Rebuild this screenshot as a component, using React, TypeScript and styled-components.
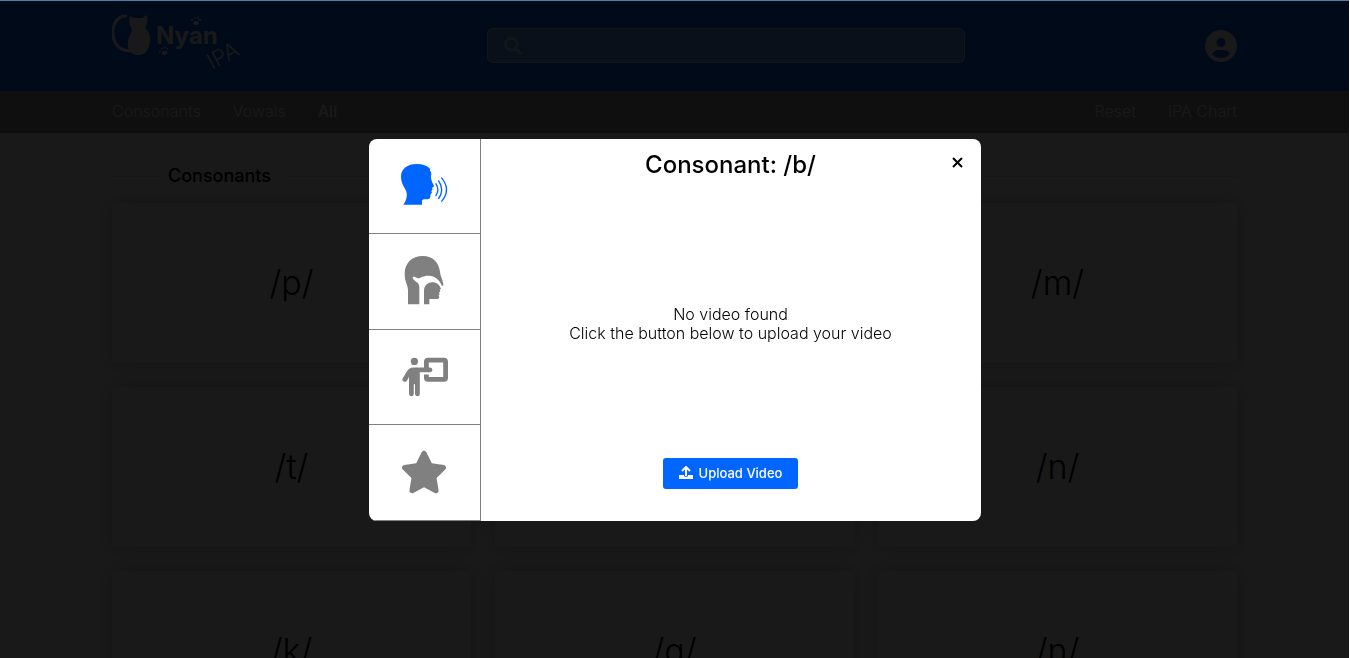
import React from "react";
import styled, { createGlobalStyle } from "styled-components";
import { FaCircleUser, FaPersonChalkboard, FaStar } from "react-icons/fa6";
import { FaSearch } from "react-icons/fa";

const GlobalStyle = createGlobalStyle`
  *, *::before, *::after { box-sizing: border-box; }
  body {
    margin: 0;
    overflow: hidden;
    background: #fff;
    color: #000;
    font-family: Inter, "Liberation Sans", sans-serif;
    font-size: 16px;
    line-height: 19px;
  }
  button, input { font: inherit; color: inherit; }
`;

const Page = styled.div`
  margin-right: 1px;
  background: #fafafa;
`;

const Header = styled.header`
  display: flex;
  align-items: center;
  justify-content: space-between;
  height: 91px;
  padding: 0 112px;
  background: #0066ff;
  color: #fff;
`;

const LogoLink = styled.a`
  display: block;
  width: 135px;
  height: 64px;
  color: inherit;
`;

const SearchBox = styled.label`
  display: flex;
  align-items: center;
  gap: 12px;
  width: 42.5%;
  height: 35px;
  padding: 0 16px;
  border: 1px solid rgba(255, 255, 255, 0.5);
  border-radius: 6px;
  background: rgba(255, 255, 255, 0.4);

  svg { opacity: 0.6; }
`;

const SearchInput = styled.input`
  flex: 1;
  min-width: 0;
  border: 0;
  outline: 0;
  background: transparent;
`;

const IconButton = styled.button`
  display: flex;
  padding: 0;
  border: 0;
  background: transparent;
  cursor: pointer;
`;

const Nav = styled.nav`
  display: flex;
  justify-content: space-between;
  align-items: center;
  height: 42px;
  padding: 0 112px 2px;
  background: #98989c;
`;

const NavGroup = styled.div`
  display: flex;
  gap: 32px;
`;

const NavLink = styled.a<{ $active?: boolean }>`
  color: #fff;
  font-weight: ${(p) => (p.$active ? 500 : 300)};
  text-decoration: none;
`;

const Main = styled.main`
  padding: 32px 112px;
`;

const SectionTitle = styled.h2`
  display: flex;
  align-items: center;
  gap: 8px;
  margin: 0 0 16px;
  font-size: 18px;
  font-weight: 500;
  line-height: 22px;

  &::before, &::after {
    content: "";
    height: 1px;
    background: #e0e0e0;
  }
  &::before { width: 48px; }
  &::after { flex: 1; margin-left: 8px; }
`;

const CardGrid = styled.div`
  display: grid;
  grid-template-columns: repeat(3, 1fr);
  gap: 24px;
`;

const Card = styled.button`
  height: 160px;
  border: 0;
  border-radius: 4px;
  background: #fff;
  box-shadow: 0 0 16px rgba(0, 0, 0, 0.2);
  font-size: 34px;
  font-weight: 300;
  line-height: 40px;
  cursor: pointer;
`;

const Overlay = styled.div`
  position: fixed;
  inset: 0 1px 0 0;
  display: flex;
  align-items: center;
  justify-content: center;
  border-top: 1px solid #4f7ea3;
  background: rgba(0, 0, 0, 0.9);
`;

const Dialog = styled.section`
  display: flex;
  width: 612px;
  max-width: 90%;
  min-height: 382px;
  border-radius: 8px;
  overflow: hidden;
  background: #fff;
`;

const Tabs = styled.div`
  display: grid;
  grid-template-rows: repeat(4, 1fr);
  width: 112px;
  border-right: 1px solid #808080;
`;

const Tab = styled.button<{ $active?: boolean }>`
  display: flex;
  align-items: center;
  justify-content: center;
  padding: 0;
  border: 0;
  border-bottom: 1px solid #808080;
  background: transparent;
  color: ${(p) => (p.$active ? "#0066ff" : "#808080")};
  cursor: pointer;
`;

const Panel = styled.div`
  flex: 1;
  display: flex;
  flex-direction: column;
  padding: 11px 16px 32px;
`;

const PanelHeader = styled.div`
  display: grid;
  grid-template-columns: 1fr auto 1fr;
  align-items: center;
`;

const Title = styled.h1`
  grid-column: 2;
  margin: 0;
  font-size: 24px;
  font-weight: 500;
  line-height: 29px;
`;

const CloseButton = styled(IconButton)`
  justify-self: end;
  align-self: start;
  padding: 6px 0;
`;

const Message = styled.div`
  flex: 1;
  display: flex;
  flex-direction: column;
  justify-content: center;
  padding-top: 12px;
  text-align: center;
  font-weight: 300;

  p { margin: 0; }
`;

const UploadButton = styled.button`
  display: flex;
  align-items: center;
  align-self: center;
  gap: 6px;
  height: 31px;
  padding: 0 16px;
  border: 0;
  border-radius: 3px;
  background: #0066ff;
  color: #fff;
  font-size: 13px;
  font-weight: 500;
  line-height: 16px;
  cursor: pointer;
`;

const Paw = () => (
  <g>
    <ellipse cx="0" cy="2" rx="3" ry="2" />
    <circle cx="-4" cy="-1" r="1" />
    <circle cx="-1" cy="-3" r="1" />
    <circle cx="2" cy="-3" r="1" />
    <circle cx="4" cy="-1" r="1" />
  </g>
);

const Logo = () => (
  <svg width="135" height="64" viewBox="112 14 135 64" fill="currentColor" aria-hidden="true">
    <path d="M127 16C117 15 112 25 113 35C114 46 122 51 131 51" fill="none" stroke="currentColor" strokeWidth="3" />
    <path d="M130 16L134 18H142L147 15C148 21 147 25 145 28C151 33 151 40 149 46C147 53 143 55 138 55C131 55 127 49 128 41C129 36 132 32 132 29C129 25 129 20 130 16Z" />
    <text x="156" y="44" fontSize="24" fontWeight="700">Nyan</text>
    <text transform="translate(212 70) rotate(-28)" fontSize="22" fontWeight="300">IPA</text>
    <g transform="translate(196 21)"><Paw /></g>
    <g transform="translate(164 51) rotate(-20)"><Paw /></g>
  </svg>
);

const SpeakIcon = () => (
  <svg width="56" height="56" viewBox="108 82 168 168" fill="currentColor" aria-hidden="true">
    <path d="M130 222C138 211 142 198 140 186C137 173 123 160 123 138C123 114 143 100 170 100C188 100 202 105 211 115L209 119C214 124 215 129 213 135C212 141 214 146 215 150C217 157 222 163 222 167C221 170 217 170 216 172L218 177L214 181L216 186L212 190C211 196 212 201 208 204C202 207 188 203 186 210V222Z" />
    <g fill="none" stroke="currentColor" strokeWidth="4">
      <path d="M227 158Q240 177 227 196" />
      <path d="M235 149Q255 177 235 205" />
      <path d="M244 141Q275 177 244 213" />
    </g>
  </svg>
);

const MouthIcon = () => (
  <svg width="56" height="56" viewBox="108 368 168 168" fill="currentColor" aria-hidden="true">
    <path d="M144 522V478C143 462 134 455 134 430C134 398 156 377 188 377C220 377 236 397 240 424C241 438 251 455 250 464L246 468C240 448 224 437 207 436C190 435 182 444 172 444C168 439 159 437 158 442C159 452 178 454 178 469V522Z" />
    <path d="M192 522V482C192 465 204 456 218 456C230 456 238 463 243 475L239 478L241 483L237 487L239 492L236 495L238 500C237 506 233 506 228 506H208V522Z" />
  </svg>
);

const CloseIcon = () => (
  <svg width="15" height="12" viewBox="0 0 15 12" fill="none" stroke="currentColor" strokeWidth="2" aria-hidden="true">
    <path d="M3 2L12 11M12 2L3 11" />
  </svg>
);

const UploadIcon = () => (
  <svg width="14" height="14" viewBox="0 0 14 14" fill="currentColor" aria-hidden="true">
    <path d="M0 9H5V10C5 11 9 11 9 10V9H14V13H0Z" />
    <path d="M7 10V2M3 5L7 1L11 5" fill="none" stroke="currentColor" strokeWidth="2" />
  </svg>
);

const sounds = ["p", "b", "m", "t", "d", "n", "k", "g", "ɲ"];

export default function App() {
  return (
    <>
      <GlobalStyle />
      <Page>
        <Header>
          <LogoLink href="#" aria-label="Nyan IPA">
            <Logo />
          </LogoLink>
          <SearchBox>
            <FaSearch size={18} aria-hidden="true" />
            <SearchInput type="search" aria-label="Search" />
          </SearchBox>
          <IconButton aria-label="Account">
            <FaCircleUser size={32} />
          </IconButton>
        </Header>
        <Nav>
          <NavGroup>
            <NavLink href="#consonants">Consonants</NavLink>
            <NavLink href="#vowals">Vowals</NavLink>
            <NavLink href="#all" $active>All</NavLink>
          </NavGroup>
          <NavGroup>
            <NavLink href="#reset">Reset</NavLink>
            <NavLink href="#chart">IPA Chart</NavLink>
          </NavGroup>
        </Nav>
        <Main>
          <SectionTitle>Consonants</SectionTitle>
          <CardGrid>
            {sounds.map((sound) => (
              <Card key={sound}>/{sound}/</Card>
            ))}
          </CardGrid>
        </Main>
      </Page>
      <Overlay>
        <Dialog role="dialog" aria-modal="true" aria-labelledby="dialog-title">
          <Tabs role="tablist">
            <Tab role="tab" aria-label="Pronunciation" aria-selected="true" $active>
              <SpeakIcon />
            </Tab>
            <Tab role="tab" aria-label="Mouth position">
              <MouthIcon />
            </Tab>
            <Tab role="tab" aria-label="Lesson">
              <FaPersonChalkboard size={48} />
            </Tab>
            <Tab role="tab" aria-label="Favourite">
              <FaStar size={48} />
            </Tab>
          </Tabs>
          <Panel>
            <PanelHeader>
              <Title id="dialog-title">Consonant: /b/</Title>
              <CloseButton aria-label="Close">
                <CloseIcon />
              </CloseButton>
            </PanelHeader>
            <Message>
              <p>No video found</p>
              <p>Click the button below to upload your video</p>
            </Message>
            <UploadButton>
              <UploadIcon />
              Upload Video
            </UploadButton>
          </Panel>
        </Dialog>
      </Overlay>
    </>
  );
}
